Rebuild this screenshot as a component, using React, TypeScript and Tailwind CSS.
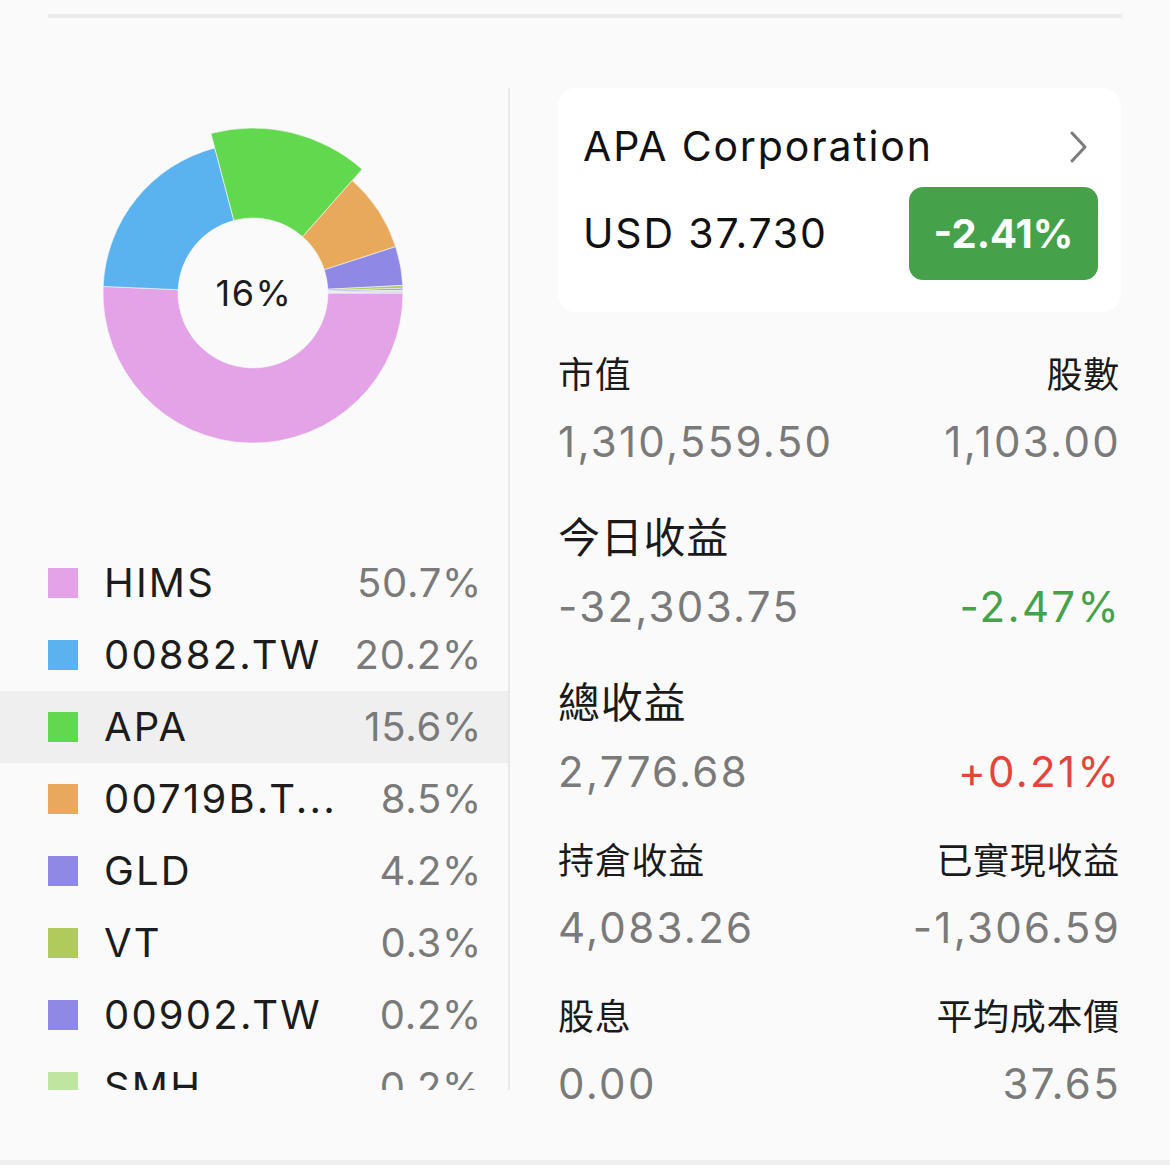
const holdings = [
  { name: "HIMS", pct: 50.7, color: "#E4A2E7" },
  { name: "00882.TW", pct: 20.2, color: "#5AB3EE" },
  { name: "APA", pct: 15.6, color: "#62D84F", active: true },
  { name: "00719B.T...", pct: 8.5, color: "#E9A95B" },
  { name: "GLD", pct: 4.2, color: "#8D89E5" },
  { name: "VT", pct: 0.3, color: "#AFCB5C" },
  { name: "00902.TW", pct: 0.2, color: "#8D89E5" },
  { name: "SMH", pct: 0.2, color: "#BFE6A0" },
];

// tail of the list that is scrolled out of view, only visible as a sliver
const chartData = [...holdings, { name: "rest", pct: 0.1, color: "#A9C9E2" }];

const CX = 253;
const CY = 205;

function pt(r: number, a: number) {
  const rad = (a * Math.PI) / 180;
  return `${(CX + r * Math.cos(rad)).toFixed(2)} ${(CY + r * Math.sin(rad)).toFixed(2)}`;
}

function arcPath(r0: number, r1: number, a0: number, a1: number) {
  const large = a1 - a0 > 180 ? 1 : 0;
  return [
    `M ${pt(r1, a0)}`,
    `A ${r1} ${r1} 0 ${large} 1 ${pt(r1, a1)}`,
    `L ${pt(r0, a1)}`,
    `A ${r0} ${r0} 0 ${large} 0 ${pt(r0, a0)}`,
    "Z",
  ].join(" ");
}

function Donut() {
  const total = chartData.reduce((s, d) => s + d.pct, 0);
  let angle = 0;
  return (
    <svg width="508" height="459" viewBox="0 0 508 459" className="block">
      {chartData.map((d, i) => {
        const a0 = angle;
        const a1 = angle + (d.pct / total) * 360;
        angle = a1;
        const outer = "active" in d && d.active ? 165 : 150;
        return (
          <path key={i} d={arcPath(75, outer, a0, a1)} fill={d.color} stroke="#fafafa" strokeWidth={0.6} />
        );
      })}
      <text
        x={CX + 1}
        y={CY + 13}
        textAnchor="middle"
        fontSize="36"
        letterSpacing="1.5"
        fill="#1c1c1c"
        fontFamily="Inter, 'Noto Sans', sans-serif"
      >
        16%
      </text>
    </svg>
  );
}

function Stat({
  label,
  value,
  rightLabel,
  rightValue,
  rightColor,
  big,
}: {
  label: string;
  value: string;
  rightLabel?: string;
  rightValue?: string;
  rightColor?: string;
  big?: boolean;
}) {
  return (
    <div className={big ? "mt-[44px]" : "mt-[39px]"}>
      <div className={`flex justify-between pr-[1px] text-[#1a1a1a] ${big ? "text-[42px] leading-[52px]" : "text-[36px] leading-[48px]"}`}>
        <span>{label}</span>
        <span>{rightLabel}</span>
      </div>
      <div className="mt-[17px] flex justify-between text-[42px] leading-[52px] tracking-[0.055em] text-[#7a7a7a]">
        <span>{value}</span>
        <span className={rightColor}>{rightValue}</span>
      </div>
    </div>
  );
}

export default function App() {
  return (
    <div
      className="relative h-[1165px] w-[1170px] overflow-hidden bg-[#fafafa] tracking-[0.045em]"
      style={{ fontFamily: "Inter, 'Noto Sans CJK TC', 'Noto Sans', sans-serif" }}
    >
      <div className="mx-[48px] mt-[14px] h-[4px] bg-[#ececec]" />

      <div className="mt-[70px] flex h-[1002px]">
        {/* left: allocation chart + legend */}
        <div className="h-full w-[508px] overflow-hidden">
          <Donut />
          <ul>
            {holdings.map((h) => (
              <li
                key={h.name}
                className={`flex h-[72px] items-center pl-[48px] pr-[26px] ${h.active ? "bg-[#efefef]" : ""}`}
              >
                <span className="h-[30px] w-[30px] shrink-0" style={{ backgroundColor: h.color }} />
                <span className="ml-[26px] flex-1 text-[40px] tracking-[0.055em] text-[#1c1c1c]">{h.name}</span>
                <span className="text-[40px] text-[#7a7a7a]">{h.pct.toFixed(1)}%</span>
              </li>
            ))}
          </ul>
        </div>

        <div className="h-full w-[2px] bg-[#e8e8e8]" />

        {/* right: selected holding */}
        <div className="ml-[48px] w-[563px]">
          <div className="h-[224px] rounded-[18px] bg-white pl-[25px] pr-[23px] pt-[33px]">
            <div className="flex h-[52px] items-center justify-between">
              <span className="text-[41px] tracking-[0.045em] text-[#111]">APA Corporation</span>
              <svg width="22" height="34" viewBox="0 0 22 34" className="mr-[8px]">
                <polyline points="4,3 17,17 4,31" fill="none" stroke="#7b7b7b" strokeWidth="3" strokeLinecap="round" strokeLinejoin="round" />
              </svg>
            </div>
            <div className="mt-[14px] flex items-center justify-between">
              <span className="text-[41px] tracking-[0.045em] text-[#111]">USD 37.730</span>
              <span className="flex h-[93px] w-[189px] items-center justify-center rounded-[14px] bg-[#46A24A] text-[40px] font-bold tracking-normal text-white">
                -2.41%
              </span>
            </div>
          </div>

          <div>
            <Stat label="市值" value="1,310,559.50" rightLabel="股數" rightValue="1,103.00" />
            <Stat big label="今日收益" value="-32,303.75" rightValue="-2.47%" rightColor="text-[#46A24A]" />
            <Stat big label="總收益" value="2,776.68" rightValue="+0.21%" rightColor="text-[#E5443B]" />
            <Stat label="持倉收益" value="4,083.26" rightLabel="已實現收益" rightValue="-1,306.59" />
            <Stat label="股息" value="0.00" rightLabel="平均成本價" rightValue="37.65" />
          </div>
        </div>
      </div>

      <div className="absolute bottom-0 left-0 h-[5px] w-full bg-[#efefef]" />
    </div>
  );
}
